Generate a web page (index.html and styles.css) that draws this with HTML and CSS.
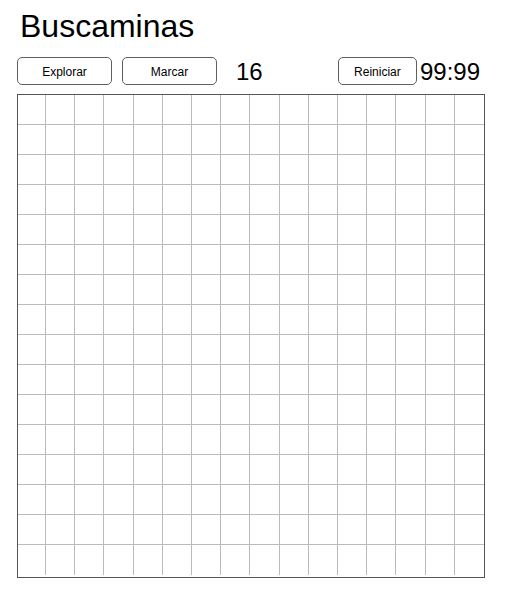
FILE: index.html
```html
<!DOCTYPE html>
<html lang="es">
<head>
<meta charset="utf-8">
<title>Buscaminas</title>
<link rel="stylesheet" href="styles.css">
</head>
<body>
<main class="game">
  <h1 class="title">Buscaminas</h1>
  <div class="toolbar">
    <button class="btn btn-wide">Explorar</button>
    <button class="btn btn-wide btn-gap">Marcar</button>
    <span class="counter">16</span>
    <button class="btn btn-reset">Reiniciar</button>
    <span class="timer">99:99</span>
  </div>
  <div class="board">
    <div class="cell"></div><div class="cell"></div><div class="cell"></div><div class="cell"></div><div class="cell"></div><div class="cell"></div><div class="cell"></div><div class="cell"></div><div class="cell"></div><div class="cell"></div><div class="cell"></div><div class="cell"></div><div class="cell"></div><div class="cell"></div><div class="cell"></div><div class="cell"></div>
    <div class="cell"></div><div class="cell"></div><div class="cell"></div><div class="cell"></div><div class="cell"></div><div class="cell"></div><div class="cell"></div><div class="cell"></div><div class="cell"></div><div class="cell"></div><div class="cell"></div><div class="cell"></div><div class="cell"></div><div class="cell"></div><div class="cell"></div><div class="cell"></div>
    <div class="cell"></div><div class="cell"></div><div class="cell"></div><div class="cell"></div><div class="cell"></div><div class="cell"></div><div class="cell"></div><div class="cell"></div><div class="cell"></div><div class="cell"></div><div class="cell"></div><div class="cell"></div><div class="cell"></div><div class="cell"></div><div class="cell"></div><div class="cell"></div>
    <div class="cell"></div><div class="cell"></div><div class="cell"></div><div class="cell"></div><div class="cell"></div><div class="cell"></div><div class="cell"></div><div class="cell"></div><div class="cell"></div><div class="cell"></div><div class="cell"></div><div class="cell"></div><div class="cell"></div><div class="cell"></div><div class="cell"></div><div class="cell"></div>
    <div class="cell"></div><div class="cell"></div><div class="cell"></div><div class="cell"></div><div class="cell"></div><div class="cell"></div><div class="cell"></div><div class="cell"></div><div class="cell"></div><div class="cell"></div><div class="cell"></div><div class="cell"></div><div class="cell"></div><div class="cell"></div><div class="cell"></div><div class="cell"></div>
    <div class="cell"></div><div class="cell"></div><div class="cell"></div><div class="cell"></div><div class="cell"></div><div class="cell"></div><div class="cell"></div><div class="cell"></div><div class="cell"></div><div class="cell"></div><div class="cell"></div><div class="cell"></div><div class="cell"></div><div class="cell"></div><div class="cell"></div><div class="cell"></div>
    <div class="cell"></div><div class="cell"></div><div class="cell"></div><div class="cell"></div><div class="cell"></div><div class="cell"></div><div class="cell"></div><div class="cell"></div><div class="cell"></div><div class="cell"></div><div class="cell"></div><div class="cell"></div><div class="cell"></div><div class="cell"></div><div class="cell"></div><div class="cell"></div>
    <div class="cell"></div><div class="cell"></div><div class="cell"></div><div class="cell"></div><div class="cell"></div><div class="cell"></div><div class="cell"></div><div class="cell"></div><div class="cell"></div><div class="cell"></div><div class="cell"></div><div class="cell"></div><div class="cell"></div><div class="cell"></div><div class="cell"></div><div class="cell"></div>
    <div class="cell"></div><div class="cell"></div><div class="cell"></div><div class="cell"></div><div class="cell"></div><div class="cell"></div><div class="cell"></div><div class="cell"></div><div class="cell"></div><div class="cell"></div><div class="cell"></div><div class="cell"></div><div class="cell"></div><div class="cell"></div><div class="cell"></div><div class="cell"></div>
    <div class="cell"></div><div class="cell"></div><div class="cell"></div><div class="cell"></div><div class="cell"></div><div class="cell"></div><div class="cell"></div><div class="cell"></div><div class="cell"></div><div class="cell"></div><div class="cell"></div><div class="cell"></div><div class="cell"></div><div class="cell"></div><div class="cell"></div><div class="cell"></div>
    <div class="cell"></div><div class="cell"></div><div class="cell"></div><div class="cell"></div><div class="cell"></div><div class="cell"></div><div class="cell"></div><div class="cell"></div><div class="cell"></div><div class="cell"></div><div class="cell"></div><div class="cell"></div><div class="cell"></div><div class="cell"></div><div class="cell"></div><div class="cell"></div>
    <div class="cell"></div><div class="cell"></div><div class="cell"></div><div class="cell"></div><div class="cell"></div><div class="cell"></div><div class="cell"></div><div class="cell"></div><div class="cell"></div><div class="cell"></div><div class="cell"></div><div class="cell"></div><div class="cell"></div><div class="cell"></div><div class="cell"></div><div class="cell"></div>
    <div class="cell"></div><div class="cell"></div><div class="cell"></div><div class="cell"></div><div class="cell"></div><div class="cell"></div><div class="cell"></div><div class="cell"></div><div class="cell"></div><div class="cell"></div><div class="cell"></div><div class="cell"></div><div class="cell"></div><div class="cell"></div><div class="cell"></div><div class="cell"></div>
    <div class="cell"></div><div class="cell"></div><div class="cell"></div><div class="cell"></div><div class="cell"></div><div class="cell"></div><div class="cell"></div><div class="cell"></div><div class="cell"></div><div class="cell"></div><div class="cell"></div><div class="cell"></div><div class="cell"></div><div class="cell"></div><div class="cell"></div><div class="cell"></div>
    <div class="cell"></div><div class="cell"></div><div class="cell"></div><div class="cell"></div><div class="cell"></div><div class="cell"></div><div class="cell"></div><div class="cell"></div><div class="cell"></div><div class="cell"></div><div class="cell"></div><div class="cell"></div><div class="cell"></div><div class="cell"></div><div class="cell"></div><div class="cell"></div>
    <div class="cell"></div><div class="cell"></div><div class="cell"></div><div class="cell"></div><div class="cell"></div><div class="cell"></div><div class="cell"></div><div class="cell"></div><div class="cell"></div><div class="cell"></div><div class="cell"></div><div class="cell"></div><div class="cell"></div><div class="cell"></div><div class="cell"></div><div class="cell"></div>
  </div>
</main>
</body>
</html>
```
FILE: styles.css
```css
html, body {
  margin: 0;
  padding: 0;
  background: #ffffff;
}

body {
  font-family: "Liberation Sans", Arial, sans-serif;
  color: #000000;
}

.game {
  padding: 8px 0 0 17px;
  width: 468px;
}

.title {
  margin: 0;
  padding-left: 3px;
  font-size: 32px;
  font-weight: normal;
  line-height: 37px;
  height: 37px;
}

.toolbar {
  margin-top: 12px;
  height: 28px;
  display: flex;
  align-items: center;
  padding-right: 5px;
}

.btn {
  box-sizing: border-box;
  height: 28px;
  margin: 0;
  padding: 2px 0 0;
  border: 1px solid #5f5f5f;
  border-radius: 5px;
  background: #ffffff;
  color: #000000;
  font-family: "Liberation Sans", Arial, sans-serif;
  font-size: 12px;
  line-height: 14px;
  text-align: center;
}

.btn-wide {
  width: 95px;
}

.btn-gap {
  margin-left: 10px;
}

.btn-reset {
  width: 79px;
  margin-left: auto;
}

.counter {
  margin-left: 19px;
  font-size: 24px;
  line-height: 28px;
  padding-top: 2px;
}

.timer {
  margin-left: 3px;
  font-size: 24px;
  line-height: 28px;
  padding-top: 2px;
}

.board {
  box-sizing: border-box;
  margin-top: 9px;
  width: 468px;
  height: 484px;
  border: 1px solid #555555;
  display: grid;
  grid-template-columns: 28px repeat(15, 1fr);
  grid-template-rows: repeat(16, 30px);
  align-content: start;
}

.cell {
  box-sizing: border-box;
  border-right: 1px solid #bbbbbb;
  border-bottom: 1px solid #bbbbbb;
}

.cell:nth-child(16n) {
  border-right: none;
}

.cell:nth-last-child(-n+16) {
  border-bottom: none;
}
```
